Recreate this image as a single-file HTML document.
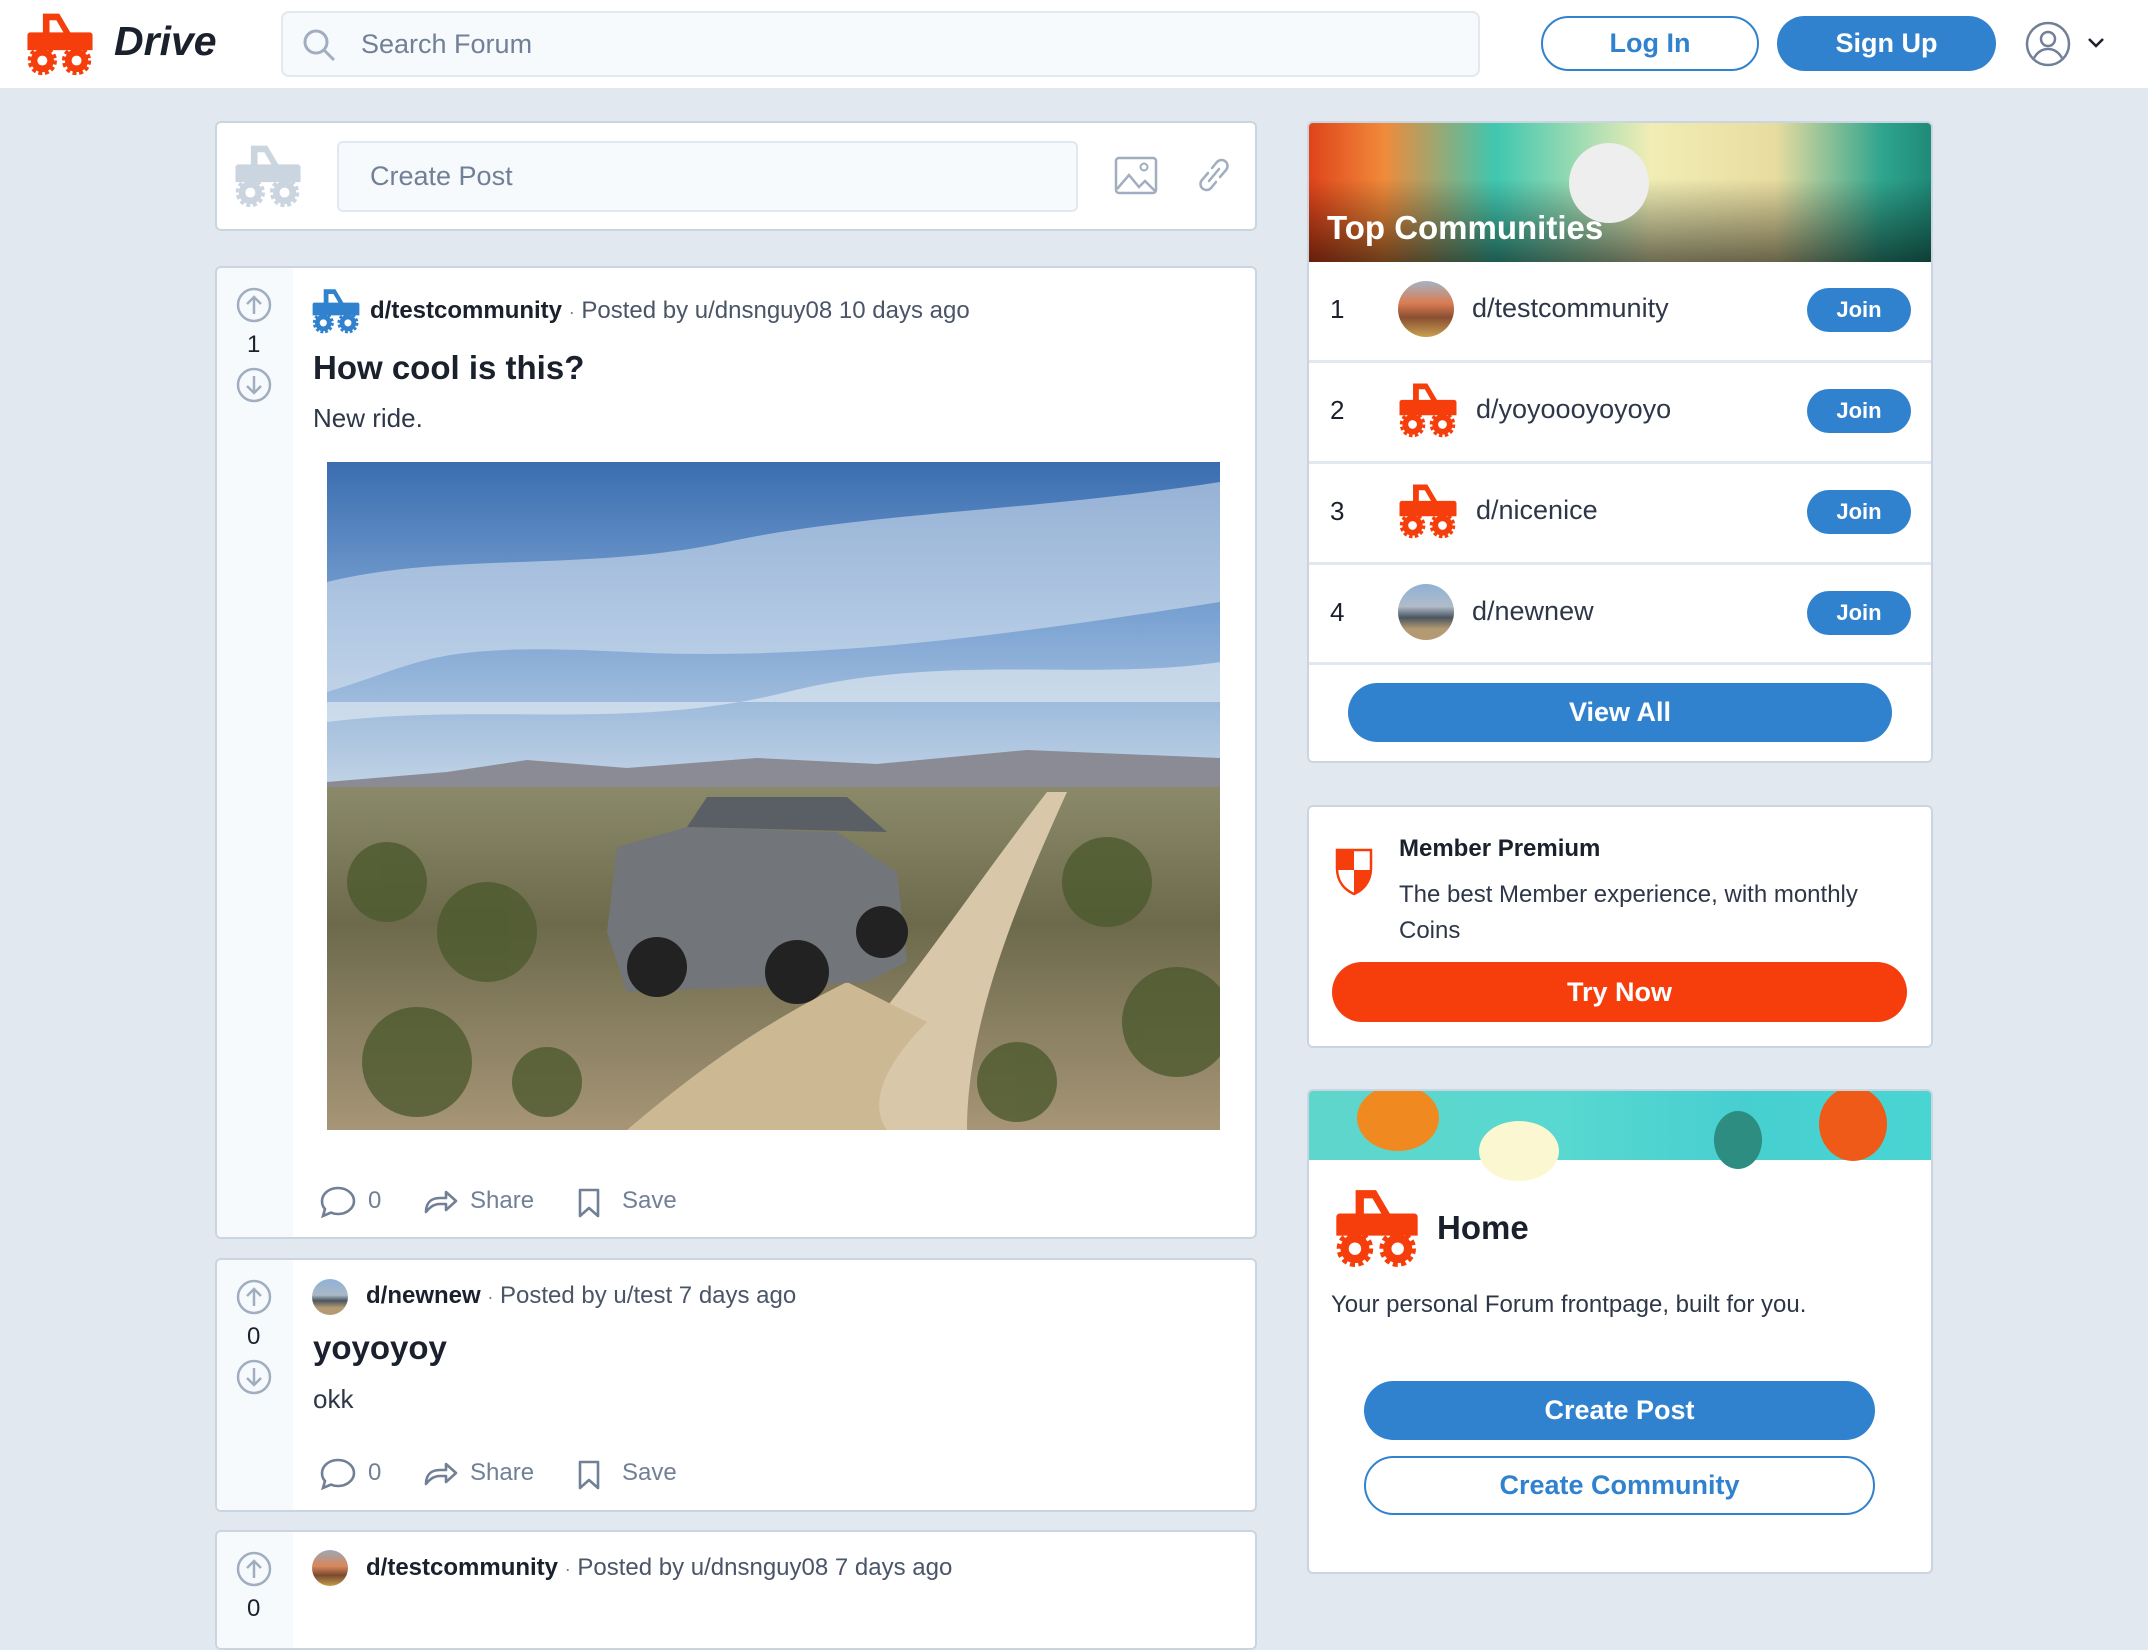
<!DOCTYPE html>
<html><head><meta charset="utf-8">
<style>
*{box-sizing:border-box;margin:0;padding:0}
body{width:2148px;height:1608px;overflow:hidden;background:#e2e8f0;font-family:"Liberation Sans",sans-serif;color:#1a202c;position:relative}
.a{position:absolute}
.card{position:absolute;background:#fff;border:2px solid #cbd5e0;border-radius:6px;overflow:hidden}
.btn{position:absolute;border-radius:40px;display:flex;align-items:center;justify-content:center;font-weight:bold}
.t{position:absolute;white-space:nowrap}
.gray{color:#718096}
.row{position:absolute;left:0;width:100%;border-bottom:3px solid #e2e8f0}
.av{position:absolute;border-radius:50%;overflow:hidden}
</style></head><body>
<svg width="0" height="0" style="position:absolute">
<defs>
<symbol id="truck" viewBox="0 0 62 58">
<path d="M16 2h14l10 17h18a2 2 0 0 1 2 2v13H2V21a2 2 0 0 1 2-2h12z"/>
<path d="M21 7h7l7 12H21z" fill="#fff"/>
<circle cx="15" cy="44" r="10"/><circle cx="46" cy="44" r="10"/>
<circle cx="15" cy="44" r="11.5" fill="none" stroke-width="3.5" stroke-dasharray="3.6 2.4"/>
<circle cx="46" cy="44" r="11.5" fill="none" stroke-width="3.5" stroke-dasharray="3.6 2.4"/>
<circle cx="15" cy="44" r="4.5" fill="#fff" stroke="none"/><circle cx="46" cy="44" r="4.5" fill="#fff" stroke="none"/>
</symbol>
<symbol id="up" viewBox="0 0 36 36"><circle cx="18" cy="18" r="16" fill="none" stroke="#a0aec0" stroke-width="2.5"/><path d="M18 27V10M11 17l7-7 7 7" fill="none" stroke="#a0aec0" stroke-width="2.5"/></symbol>
<symbol id="down" viewBox="0 0 36 36"><circle cx="18" cy="18" r="16" fill="none" stroke="#a0aec0" stroke-width="2.5"/><path d="M18 9v17M11 19l7 7 7-7" fill="none" stroke="#a0aec0" stroke-width="2.5"/></symbol>
<symbol id="acts" viewBox="0 0 380 40">
<path d="M20 6c9 0 16 6 16 13s-7 13-16 13c-3 0-5-.5-7-1.5L5 34l2-7c-2-2-3-5-3-8C4 12 11 6 20 6z" fill="none" stroke="#718096" stroke-width="2.6"/>
<path d="M108 30c0-10 6-14 14-14h6v-6l10 9-10 9v-6h-6c-6 0-10 3-14 8z" fill="none" stroke="#718096" stroke-width="2.6" stroke-linejoin="round"/>
<path d="M262 8h18v26l-9-8-9 8z" fill="none" stroke="#718096" stroke-width="2.6" stroke-linejoin="round"/>
</symbol>
</defs></svg>

<!-- header -->
<div class="a" style="left:0;top:0;width:2148px;height:88px;background:#fff"></div>
<svg class="a" style="left:22px;top:12px" width="76" height="64" fill="#f53e0b" stroke="#f53e0b"><use href="#truck"/></svg>
<div class="t" style="left:114px;top:18px;font-size:41px;font-weight:bold;font-style:italic;color:#1a202c">Drive</div>
<div class="a" style="left:281px;top:11px;width:1199px;height:66px;background:#f7fafc;border:2px solid #e2e8f0;border-radius:8px"></div>
<svg class="a" style="left:302px;top:28px" width="36" height="36"><circle cx="14" cy="14" r="11" fill="none" stroke="#a0aec0" stroke-width="3"/><path d="M22 22l10 10" stroke="#a0aec0" stroke-width="3"/></svg>
<div class="t gray" style="left:361px;top:29px;font-size:27px">Search Forum</div>
<div class="btn" style="left:1541px;top:16px;width:218px;height:55px;border:2px solid #3182ce;color:#3182ce;font-size:27px">Log In</div>
<div class="btn" style="left:1777px;top:16px;width:219px;height:55px;background:#3182ce;color:#fff;font-size:27px">Sign Up</div>
<svg class="a" style="left:2024px;top:20px" width="48" height="48"><circle cx="24" cy="24" r="21" fill="none" stroke="#718096" stroke-width="2.5"/><circle cx="24" cy="19" r="7" fill="none" stroke="#718096" stroke-width="2.5"/><path d="M10 38c4-7 9-9 14-9s10 2 14 9" fill="none" stroke="#718096" stroke-width="2.5"/></svg>
<svg class="a" style="left:2086px;top:36px" width="20" height="14"><path d="M3 3l7 7 7-7" fill="none" stroke="#1a202c" stroke-width="2.5"/></svg>

<!-- create post -->
<div class="card" style="left:215px;top:121px;width:1042px;height:110px"></div>
<svg class="a" style="left:230px;top:144px" width="76" height="64" fill="#cbd5e0" stroke="#cbd5e0"><use href="#truck"/></svg>
<div class="a" style="left:337px;top:141px;width:741px;height:71px;background:#f7fafc;border:2px solid #e2e8f0;border-radius:6px"></div>
<div class="t gray" style="left:370px;top:161px;font-size:27px">Create Post</div>
<svg class="a" style="left:1114px;top:156px" width="44" height="40"><rect x="2" y="2" width="40" height="35" rx="3" fill="none" stroke="#a0aec0" stroke-width="2.5"/><circle cx="30" cy="11" r="3.5" fill="none" stroke="#a0aec0" stroke-width="2"/><path d="M3 33l12-14 10 12 6-6 10 10" fill="none" stroke="#a0aec0" stroke-width="2.5"/></svg>
<svg class="a" style="left:1196px;top:156px" width="36" height="38"><path d="M16 12l5-6a6 6 0 0 1 9 8l-6 7M20 26l-5 6a6 6 0 0 1-9-8l6-7M13 25l10-12" fill="none" stroke="#a0aec0" stroke-width="2.5" stroke-linecap="round"/></svg>

<!-- post 1 -->
<div class="card" style="left:215px;top:266px;width:1042px;height:973px"><div class="a" style="left:0;top:0;width:76px;height:100%;background:#f7fafc"></div></div>
<svg class="a" style="left:236px;top:287px" width="36" height="36"><use href="#up"/></svg>
<div class="t" style="left:247px;top:331px;font-size:24px">1</div>
<svg class="a" style="left:236px;top:367px" width="36" height="36"><use href="#down"/></svg>
<svg class="a" style="left:311px;top:288px" width="50" height="46" fill="#3182ce" stroke="#3182ce"><use href="#truck"/></svg>
<div class="t" style="left:370px;top:297px;font-size:24px"><b>d/testcommunity</b> <span class="gray" style="font-size:18px">·</span> <span style="color:#4a5568">Posted by u/dnsnguy08 10 days ago</span></div>
<div class="t" style="left:313px;top:349px;font-size:33px;font-weight:bold">How cool is this?</div>
<div class="t" style="left:313px;top:403px;font-size:26px;color:#2d3748">New ride.</div>
<svg class="a" style="left:327px;top:462px" width="893" height="668" viewBox="0 0 893 668" preserveAspectRatio="none">
<defs>
<linearGradient id="sky" x1="0" y1="0" x2="0" y2="1"><stop offset="0" stop-color="#3a6db0"/><stop offset=".5" stop-color="#7fa6d4"/><stop offset="1" stop-color="#c3d4e6"/></linearGradient>
<linearGradient id="gr" x1="0" y1="0" x2="0" y2="1"><stop offset="0" stop-color="#8a8a6a"/><stop offset=".4" stop-color="#6d6a4c"/><stop offset="1" stop-color="#a79577"/></linearGradient>
</defs>
<rect width="893" height="330" fill="url(#sky)"/>
<path d="M0 120c120-30 260-10 400-40s300-30 493-60v120C700 170 500 200 300 190S100 200 0 230z" fill="#dde6f0" opacity=".55"/>
<path d="M0 260c160-20 300 10 460-30s300-10 433-30v40H0z" fill="#e8eef4" opacity=".6"/>
<path d="M0 320l120-10 80-12 100 8 130-10 120 6 150-14 193 8v40H0z" fill="#8a8b94"/>
<rect y="325" width="893" height="343" fill="url(#gr)"/>
<path d="M450 668C560 560 620 460 720 330l20 0C690 440 640 560 640 668z" fill="#d8c7a8"/>
<path d="M300 668C380 600 440 560 520 520L600 560C560 600 540 640 560 668z" fill="#cdb894"/>
<path d="M290 385l70-20 150 5 60 40 10 90-40 20-240 10-20-60z" fill="#72767a"/>
<path d="M360 365l20-30 140 0 40 35z" fill="#5a5f66"/>
<circle cx="330" cy="505" r="30" fill="#222"/><circle cx="470" cy="510" r="32" fill="#222"/><circle cx="555" cy="470" r="26" fill="#222"/>
<g fill="#4d5a2e" opacity=".8"><circle cx="60" cy="420" r="40"/><circle cx="160" cy="470" r="50"/><circle cx="780" cy="420" r="45"/><circle cx="850" cy="560" r="55"/><circle cx="690" cy="620" r="40"/><circle cx="90" cy="600" r="55"/><circle cx="220" cy="620" r="35"/></g>
</svg>
<svg class="a" style="left:318px;top:1182px" width="380" height="40"><use href="#acts"/></svg>
<div class="t gray" style="left:368px;top:1187px;font-size:24px">0</div>
<div class="t gray" style="left:470px;top:1187px;font-size:24px">Share</div>
<div class="t gray" style="left:622px;top:1187px;font-size:24px">Save</div>

<!-- post 2 -->
<div class="card" style="left:215px;top:1258px;width:1042px;height:254px"><div class="a" style="left:0;top:0;width:76px;height:100%;background:#f7fafc"></div></div>
<svg class="a" style="left:236px;top:1279px" width="36" height="36"><use href="#up"/></svg>
<div class="t" style="left:247px;top:1323px;font-size:24px">0</div>
<svg class="a" style="left:236px;top:1359px" width="36" height="36"><use href="#down"/></svg>
<div class="av" style="left:312px;top:1279px;width:36px;height:36px;background:linear-gradient(#8fb1d6 0,#a9b8c6 45%,#4a5560 60%,#b39a72 80%)"></div>
<div class="t" style="left:366px;top:1282px;font-size:24px"><b>d/newnew</b> <span class="gray" style="font-size:18px">·</span> <span style="color:#4a5568">Posted by u/test 7 days ago</span></div>
<div class="t" style="left:313px;top:1329px;font-size:33px;font-weight:bold">yoyoyoy</div>
<div class="t" style="left:313px;top:1384px;font-size:26px;color:#2d3748">okk</div>
<svg class="a" style="left:318px;top:1454px" width="380" height="40"><use href="#acts"/></svg>
<div class="t gray" style="left:368px;top:1459px;font-size:24px">0</div>
<div class="t gray" style="left:470px;top:1459px;font-size:24px">Share</div>
<div class="t gray" style="left:622px;top:1459px;font-size:24px">Save</div>

<!-- post 3 -->
<div class="card" style="left:215px;top:1530px;width:1042px;height:120px"><div class="a" style="left:0;top:0;width:76px;height:100%;background:#f7fafc"></div></div>
<svg class="a" style="left:236px;top:1551px" width="36" height="36"><use href="#up"/></svg>
<div class="t" style="left:247px;top:1595px;font-size:24px">0</div>
<div class="av" style="left:312px;top:1550px;width:36px;height:36px;background:linear-gradient(#9aa8b8 0,#d9865a 45%,#7a4a30 70%,#c69a4a 100%)"></div>
<div class="t" style="left:366px;top:1554px;font-size:24px"><b>d/testcommunity</b> <span class="gray" style="font-size:18px">·</span> <span style="color:#4a5568">Posted by u/dnsnguy08 7 days ago</span></div>

<!-- top communities -->
<div class="card" style="left:1307px;top:121px;width:626px;height:642px">
<div class="a" style="left:0;top:0;width:100%;height:139px;background:linear-gradient(90deg,#e0431a 0,#f08a3a 12%,#3fc7b0 30%,#f1edb5 55%,#e8dca0 75%,#2fa58e 92%,#1f8a78 100%)">
<div class="a" style="left:0;top:0;width:100%;height:100%;background:linear-gradient(rgba(0,0,0,0) 40%,rgba(0,0,0,.55))"></div>
<div class="a" style="left:260px;top:20px;width:80px;height:80px;border-radius:50%;background:#eee"></div>
</div>
<div class="t" style="left:18px;top:86px;font-size:33px;font-weight:bold;color:#fff">Top Communities</div>
<div class="row" style="top:139px;height:101px"></div>
<div class="row" style="top:240px;height:101px"></div>
<div class="row" style="top:341px;height:101px"></div>
<div class="row" style="top:442px;height:100px"></div>
</div>
<div class="t" style="left:1330px;top:294px;font-size:26px">1</div>
<div class="av" style="left:1398px;top:281px;width:56px;height:56px;background:linear-gradient(#a4b3c4 0,#d97c52 40%,#8a4e32 65%,#c8a050 100%)"></div>
<div class="t" style="left:1472px;top:293px;font-size:27px;color:#2d3748">d/testcommunity</div>
<div class="btn" style="left:1807px;top:288px;width:104px;height:44px;background:#3182ce;color:#fff;font-size:22px">Join</div>
<div class="t" style="left:1330px;top:395px;font-size:26px">2</div>
<svg class="a" style="left:1397px;top:382px" width="62" height="56" fill="#f53e0b" stroke="#f53e0b"><use href="#truck"/></svg>
<div class="t" style="left:1476px;top:394px;font-size:27px;color:#2d3748">d/yoyoooyoyoyo</div>
<div class="btn" style="left:1807px;top:389px;width:104px;height:44px;background:#3182ce;color:#fff;font-size:22px">Join</div>
<div class="t" style="left:1330px;top:496px;font-size:26px">3</div>
<svg class="a" style="left:1397px;top:483px" width="62" height="56" fill="#f53e0b" stroke="#f53e0b"><use href="#truck"/></svg>
<div class="t" style="left:1476px;top:495px;font-size:27px;color:#2d3748">d/nicenice</div>
<div class="btn" style="left:1807px;top:490px;width:104px;height:44px;background:#3182ce;color:#fff;font-size:22px">Join</div>
<div class="t" style="left:1330px;top:597px;font-size:26px">4</div>
<div class="av" style="left:1398px;top:584px;width:56px;height:56px;background:linear-gradient(#8fb1d6 0,#b0bcc8 40%,#4a5560 60%,#b39a72 80%)"></div>
<div class="t" style="left:1472px;top:596px;font-size:27px;color:#2d3748">d/newnew</div>
<div class="btn" style="left:1807px;top:591px;width:104px;height:44px;background:#3182ce;color:#fff;font-size:22px">Join</div>
<div class="btn" style="left:1348px;top:683px;width:544px;height:59px;background:#3182ce;color:#fff;font-size:27px">View All</div>

<!-- premium -->
<div class="card" style="left:1307px;top:805px;width:626px;height:243px"></div>
<svg class="a" style="left:1334px;top:845px" width="40" height="52"><path d="M3 5h34v18c0 14-8 22-17 26C11 45 3 37 3 23z" fill="#fff" stroke="#f53e0b" stroke-width="2.5"/><path d="M3 5h17v20H3zM20 25h17c0 12-7 20-17 24z" fill="#f53e0b"/></svg>
<div class="t" style="left:1399px;top:835px;font-size:24px;font-weight:bold">Member Premium</div>
<div class="t" style="left:1399px;top:877px;font-size:24px;color:#2d3748;line-height:36px;white-space:normal;width:520px">The best Member experience, with monthly Coins</div>
<div class="btn" style="left:1332px;top:962px;width:575px;height:60px;background:#f53e0b;color:#fff;font-size:27px">Try Now</div>

<!-- home -->
<div class="card" style="left:1307px;top:1089px;width:626px;height:485px">
<div class="a" style="left:0;top:0;width:100%;height:69px;background:linear-gradient(90deg,#5fd6cc,#58d8d0 40%,#47cfd0 70%,#49d5d2)">
<div class="a" style="left:48px;top:-6px;width:82px;height:66px;border-radius:50%;background:#f08a20"></div>
<div class="a" style="left:170px;top:30px;width:80px;height:60px;border-radius:50%;background:#fbf7d0"></div>
<div class="a" style="left:405px;top:20px;width:48px;height:58px;border-radius:50%;background:#2c8d80"></div>
<div class="a" style="left:510px;top:-4px;width:68px;height:74px;border-radius:50%;background:#f05a18"></div>
</div>
</div>
<svg class="a" style="left:1330px;top:1188px" width="94" height="80" fill="#f53e0b" stroke="#f53e0b"><use href="#truck"/></svg>
<div class="t" style="left:1437px;top:1209px;font-size:33px;font-weight:bold">Home</div>
<div class="t" style="left:1331px;top:1291px;font-size:24px;color:#2d3748">Your personal Forum frontpage, built for you.</div>
<div class="btn" style="left:1364px;top:1381px;width:511px;height:59px;background:#3182ce;color:#fff;font-size:27px">Create Post</div>
<div class="btn" style="left:1364px;top:1456px;width:511px;height:59px;border:2px solid #3182ce;color:#3182ce;font-size:27px">Create Community</div>
</body></html>
